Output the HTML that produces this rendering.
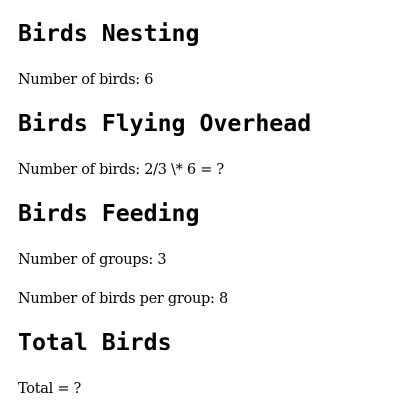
<!DOCTYPE html>
<html><head><meta charset="utf-8"><style>
html,body{margin:0;padding:0;background:#fff;width:400px;height:415px;overflow:hidden}
body{padding:0 18px;color:#000}
h2{font-family:"DejaVu Sans Mono","Liberation Mono",monospace;font-weight:bold;font-size:23.2px;line-height:28px;margin:20px 0 22px}
h2:first-child{margin-top:20px}
p{font-family:"DejaVu Serif",serif;font-size:14.5px;line-height:20px;margin:0 0 19px;letter-spacing:-0.28px}
</style></head><body>
<h2>Birds Nesting</h2>
<p>Number of birds: 6</p>
<h2>Birds Flying Overhead</h2>
<p>Number of birds: 2/3 \* 6 = ?</p>
<h2>Birds Feeding</h2>
<p>Number of groups: 3</p>
<p>Number of birds per group: 8</p>
<h2>Total Birds</h2>
<p>Total = ?</p>
</body></html>
